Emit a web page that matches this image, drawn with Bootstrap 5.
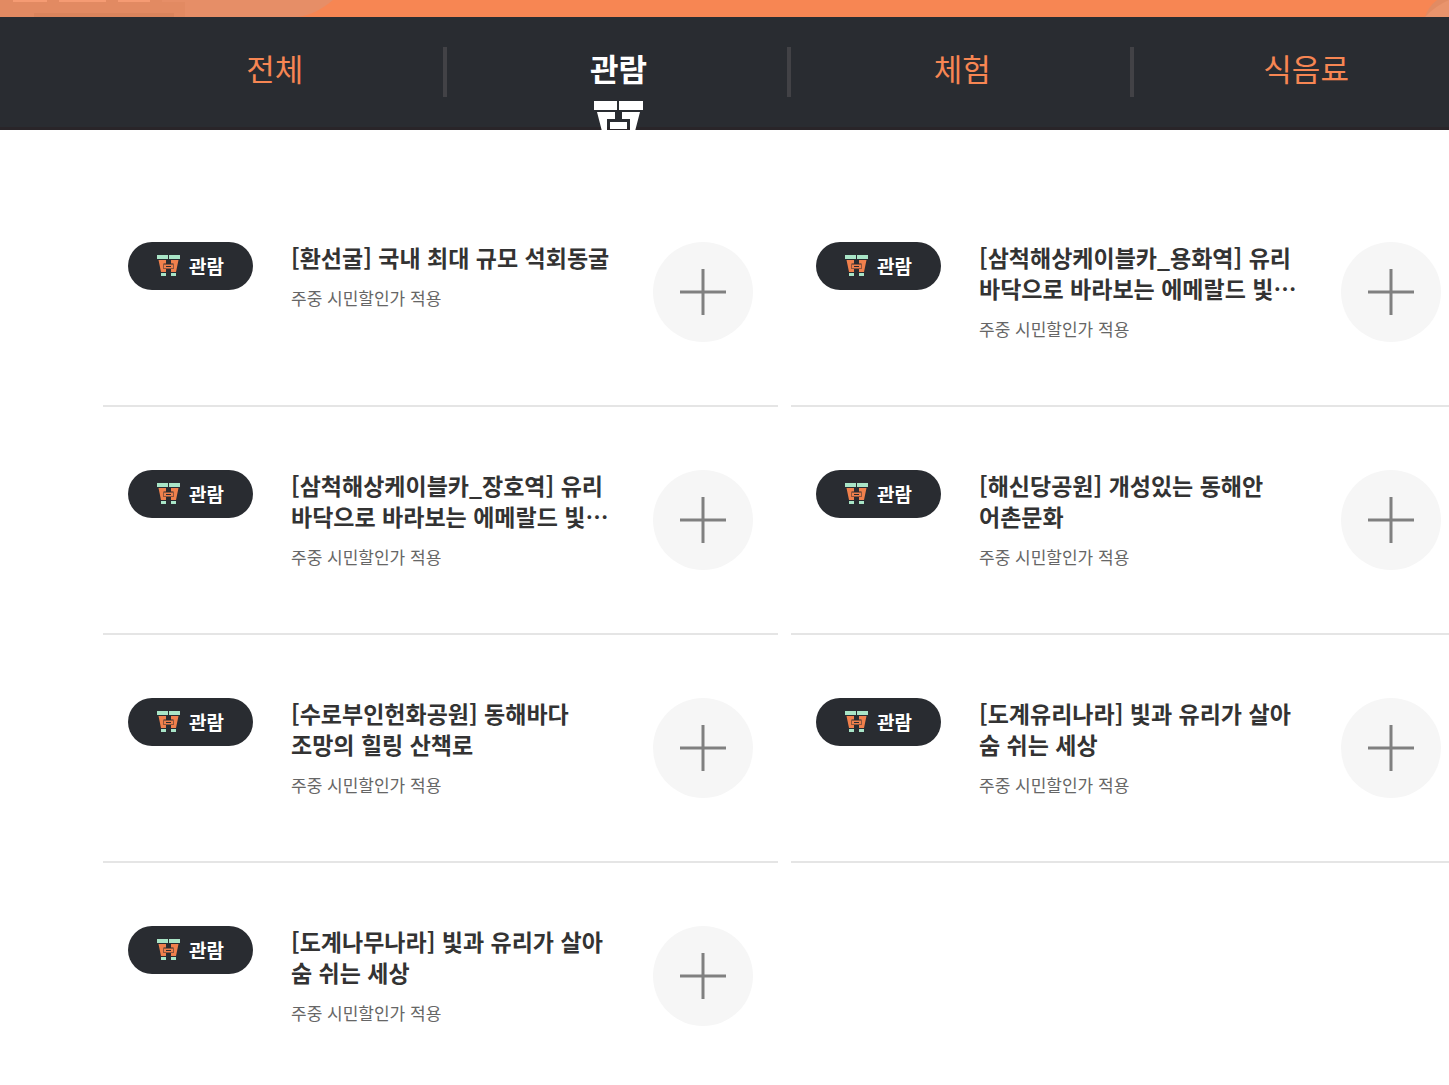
<!DOCTYPE html>
<html lang="ko">
<head>
<meta charset="utf-8">
<meta name="viewport" content="width=device-width, initial-scale=1">
<title>관람</title>
<link href="https://cdn.jsdelivr.net/npm/bootstrap@5.3.0/dist/css/bootstrap.min.css" rel="stylesheet">
<style>
body{font-family:"Noto Sans CJK KR","Noto Sans",sans-serif;color:#333;background:#fff;overflow-x:hidden}
.hero-strip{background:#f78653}
.hero-strip svg{display:block}
.inner-wrap{width:calc(100% - 74px);min-width:1375px;margin-left:103px}
.tab-bar{background:#292c31;box-shadow:inset 0 -3px #292529;overflow:hidden}
.tab-bar li{position:relative;height:113px;padding-top:28px}
.tab-bar li + li::before{content:"";position:absolute;left:-4px;top:30px;width:4px;height:50px;background:#424246}
.tab-bar a{color:#f78653;font-size:31px;line-height:46px}
.tab-bar a.active{color:#fff;font-weight:700}
.tab-mark{position:absolute;left:50%;top:83px;margin-left:-26px}
.spot-list{display:grid;grid-template-columns:1fr 1fr;column-gap:13px;padding-top:49px;margin-right:12px}
.spot-item{min-height:228px;padding:63px 25px 0;border-bottom:2px solid #e5e5e5}
.spot-item:last-child{border-bottom:0}
.spot-tag{width:125px;height:48px;background:#292c31;color:#fff;font-size:19px;line-height:28px;font-weight:700}
.spot-copy{width:350px;margin-left:38px}
.spot-copy h2{font-size:23px;line-height:31px;font-weight:700;color:#333;word-break:keep-all;margin-bottom:12px}
.spot-copy p{font-size:17px;line-height:26px;color:#666}
.plus-btn{width:100px;height:100px;background:#f6f6f6;color:#808080}
</style>
<script src="https://cdn.jsdelivr.net/npm/bootstrap@5.3.0/dist/js/bootstrap.bundle.min.js"></script>
</head>
<body>
<svg class="d-none" aria-hidden="true">
  <symbol id="scope" viewBox="0 0 24 22">
    <path fill="#a9e5c7" d="M0 0h11v4H0zM12 0h11v4H12zM4 18h5v3H4zM14 18h5v3h-5z"/>
    <path fill="#f0804c" fill-rule="evenodd" d="M1.500 5H9v3.500H6.500V14H9v3H4zM21.500 5H14v3.500h2.500V14H14v3h5zM7 9.500h9v4H7zM9 11v1h5v-1z"/>
  </symbol>
  <symbol id="plus" viewBox="0 0 46 46"><path fill="none" stroke="currentColor" stroke-width="3" d="M23 0v46M0 23h46"/></symbol>
</svg>
<header class="hero-strip d-flex justify-content-between">
  <svg width="340" height="17" viewBox="0 0 340 17" aria-hidden="true">
    <path fill="#e68e67" d="M0 0h333C322 9 312 15 298 17H0z"/>
    <path fill="#e28a62" d="M0 0h162v2h23v15H0z"/>
    <path fill="#da845c" d="M34 13h140v4H34z"/>
    <path fill="#f59b73" d="M13 0h34v2H13zM59 0h47v2H59zM118 0h32v2h-32z"/>
  </svg>
  <svg width="24" height="17" viewBox="0 0 24 17" aria-hidden="true">
    <path fill="#e18b63" d="M0 17Q3 7 12 0h12v17z"/><path fill="#e9946c" d="M0 17Q10 6 24 0v17z"/>
  </svg>
</header>
<nav class="tab-bar" aria-label="분류">
  <ul class="inner-wrap list-unstyled mb-0 row row-cols-4 gx-0">
    <li class="text-center"><a class="text-decoration-none" href="#">전체</a></li>
    <li class="text-center"><a class="text-decoration-none active" aria-current="page" href="#">관람</a>
      <svg class="tab-mark" width="50" height="48" viewBox="0 0 50 48" fill="#fff" aria-hidden="true">
        <path d="M1 1h23v9H1zM26 1h24v9H26z"/>
        <path d="M4 12h18v7h-8v13h8v7H11zM47 12H29v7h8v13h-8v7h11z"/>
        <path d="M17 22h17v7H17z"/>
      </svg></li>
    <li class="text-center"><a class="text-decoration-none" href="#">체험</a></li>
    <li class="text-center"><a class="text-decoration-none" href="#">식음료</a></li>
  </ul>
</nav>
<main class="inner-wrap">
  <div class="spot-list">
    <article class="spot-item d-flex align-items-start">
      <div class="spot-tag rounded-pill d-flex align-items-center justify-content-center gap-2 flex-shrink-0"><svg width="24" height="22" aria-hidden="true"><use href="#scope"/></svg><span>관람</span></div>
      <div class="spot-copy"><h2>[환선굴] 국내 최대 규모 석회동굴</h2><p class="mb-0">주중 시민할인가 적용</p></div>
      <button type="button" class="plus-btn btn rounded-circle border-0 p-0 ms-auto flex-shrink-0" aria-label="더보기"><svg width="46" height="46"><use href="#plus"/></svg></button>
    </article>
    <article class="spot-item d-flex align-items-start">
      <div class="spot-tag rounded-pill d-flex align-items-center justify-content-center gap-2 flex-shrink-0"><svg width="24" height="22" aria-hidden="true"><use href="#scope"/></svg><span>관람</span></div>
      <div class="spot-copy"><h2>[삼척해상케이블카_용화역] 유리<br>바닥으로 바라보는 에메랄드 빛…</h2><p class="mb-0">주중 시민할인가 적용</p></div>
      <button type="button" class="plus-btn btn rounded-circle border-0 p-0 ms-auto flex-shrink-0" aria-label="더보기"><svg width="46" height="46"><use href="#plus"/></svg></button>
    </article>
    <article class="spot-item d-flex align-items-start">
      <div class="spot-tag rounded-pill d-flex align-items-center justify-content-center gap-2 flex-shrink-0"><svg width="24" height="22" aria-hidden="true"><use href="#scope"/></svg><span>관람</span></div>
      <div class="spot-copy"><h2>[삼척해상케이블카_장호역] 유리<br>바닥으로 바라보는 에메랄드 빛…</h2><p class="mb-0">주중 시민할인가 적용</p></div>
      <button type="button" class="plus-btn btn rounded-circle border-0 p-0 ms-auto flex-shrink-0" aria-label="더보기"><svg width="46" height="46"><use href="#plus"/></svg></button>
    </article>
    <article class="spot-item d-flex align-items-start">
      <div class="spot-tag rounded-pill d-flex align-items-center justify-content-center gap-2 flex-shrink-0"><svg width="24" height="22" aria-hidden="true"><use href="#scope"/></svg><span>관람</span></div>
      <div class="spot-copy"><h2>[해신당공원] 개성있는 동해안<br>어촌문화</h2><p class="mb-0">주중 시민할인가 적용</p></div>
      <button type="button" class="plus-btn btn rounded-circle border-0 p-0 ms-auto flex-shrink-0" aria-label="더보기"><svg width="46" height="46"><use href="#plus"/></svg></button>
    </article>
    <article class="spot-item d-flex align-items-start">
      <div class="spot-tag rounded-pill d-flex align-items-center justify-content-center gap-2 flex-shrink-0"><svg width="24" height="22" aria-hidden="true"><use href="#scope"/></svg><span>관람</span></div>
      <div class="spot-copy"><h2>[수로부인헌화공원] 동해바다<br>조망의 힐링 산책로</h2><p class="mb-0">주중 시민할인가 적용</p></div>
      <button type="button" class="plus-btn btn rounded-circle border-0 p-0 ms-auto flex-shrink-0" aria-label="더보기"><svg width="46" height="46"><use href="#plus"/></svg></button>
    </article>
    <article class="spot-item d-flex align-items-start">
      <div class="spot-tag rounded-pill d-flex align-items-center justify-content-center gap-2 flex-shrink-0"><svg width="24" height="22" aria-hidden="true"><use href="#scope"/></svg><span>관람</span></div>
      <div class="spot-copy"><h2>[도계유리나라] 빛과 유리가 살아<br>숨 쉬는 세상</h2><p class="mb-0">주중 시민할인가 적용</p></div>
      <button type="button" class="plus-btn btn rounded-circle border-0 p-0 ms-auto flex-shrink-0" aria-label="더보기"><svg width="46" height="46"><use href="#plus"/></svg></button>
    </article>
    <article class="spot-item d-flex align-items-start">
      <div class="spot-tag rounded-pill d-flex align-items-center justify-content-center gap-2 flex-shrink-0"><svg width="24" height="22" aria-hidden="true"><use href="#scope"/></svg><span>관람</span></div>
      <div class="spot-copy"><h2>[도계나무나라] 빛과 유리가 살아<br>숨 쉬는 세상</h2><p class="mb-0">주중 시민할인가 적용</p></div>
      <button type="button" class="plus-btn btn rounded-circle border-0 p-0 ms-auto flex-shrink-0" aria-label="더보기"><svg width="46" height="46"><use href="#plus"/></svg></button>
    </article>
  </div>
</main>
</body>
</html>
